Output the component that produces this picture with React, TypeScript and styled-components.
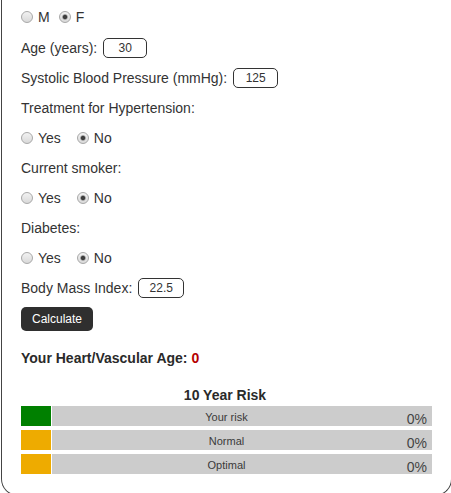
import React from "react";
import styled, { createGlobalStyle } from "styled-components";

const Global = createGlobalStyle`
  html, body {
    margin: 0;
    padding: 0;
    background: #fff;
    overflow: hidden;
  }
  body {
    font-family: "Liberation Sans", Arial, Helvetica, sans-serif;
    font-size: 14px;
    color: #333;
  }
`;

const Panel = styled.div`
  box-sizing: border-box;
  width: 451px;
  margin-left: 1px;
  border: 1px solid #444;
  border-top: none;
  border-radius: 0 0 17px 17px;
  padding: 0 19px 21px 19px;
  display: flex;
  flex-direction: column;
`;

const Row = styled.div<{ $h?: number }>`
  height: ${(p) => p.$h ?? 30}px;
  display: flex;
  align-items: center;
  gap: 6px;
  white-space: nowrap;
`;

const Label = styled.span`
  font-size: 14px;
  color: #333;
`;

const OptionGroup = styled.div<{ $gap: number }>`
  display: flex;
  align-items: center;
  gap: ${(p) => p.$gap}px;
`;

const Option = styled.label`
  display: flex;
  align-items: center;
  gap: 5px;
  font-size: 14px;
  color: #333;
`;

const Radio = styled.input.attrs({ type: "radio" })`
  appearance: none;
  -webkit-appearance: none;
  width: 12px;
  height: 12px;
  margin: 0;
  border-radius: 50%;
  border: 1px solid #a8a8a8;
  box-sizing: border-box;
  background: linear-gradient(#f2f2f2, #d9d9d9);
  &:checked {
    background: radial-gradient(circle at center, #3e3e3e 0 1.8px, #9a9a9a 2.4px, transparent 3.2px),
      linear-gradient(#f2f2f2, #d9d9d9);
  }
`;

const Field = styled.input.attrs({ type: "text" })<{ $w?: number }>`
  box-sizing: border-box;
  width: ${(p) => p.$w ?? 45}px;
  height: 20px;
  margin: 0;
  padding: 0;
  border: 1px solid #333;
  border-radius: 5px;
  background: #fff;
  font-family: "Liberation Sans", Arial, sans-serif;
  font-size: 12px;
  color: #333;
  text-align: center;
  outline: none;
`;

const Button = styled.button`
  align-self: flex-start;
  margin-top: 4px;
  height: 24px;
  padding: 0 11px;
  border: none;
  border-radius: 5px;
  background: #2f2f2f;
  color: #fff;
  font-family: "Liberation Sans", Arial, sans-serif;
  font-size: 12px;
  cursor: pointer;
`;

const HeartAge = styled.div`
  margin-top: 19px;
  font-size: 14px;
  font-weight: bold;
  color: #2a2a2a;
  line-height: 16px;
`;

const Red = styled.span`
  color: #b50000;
`;

const RiskTitle = styled.div`
  margin-top: 21px;
  padding-right: 3px;
  text-align: center;
  font-size: 14px;
  font-weight: bold;
  color: #2a2a2a;
  line-height: 16px;
`;

const Bars = styled.div`
  margin-top: 3px;
  display: flex;
  flex-direction: column;
  gap: 4px;
`;

const BarRow = styled.div`
  display: grid;
  grid-template-columns: 31px 1fr 31px;
  height: 20px;
`;

const Swatch = styled.div<{ $color: string }>`
  width: 30px;
  height: 20px;
  background: ${(p) => p.$color};
`;

const BarLabel = styled.div`
  background: #cccccc;
  font-size: 11px;
  line-height: 20px;
  padding-top: 1px;
  height: 19px;
  text-align: center;
  color: #3a3a3a;
`;

const BarValue = styled.div`
  background: #cccccc;
  font-size: 14px;
  line-height: 16px;
  padding-top: 5px;
  padding-right: 5px;
  height: 15px;
  text-align: right;
  color: #444;
  overflow: visible;
`;

const YesNo: React.FC<{ name: string }> = ({ name }) => (
  <OptionGroup $gap={16}>
    <Option>
      <Radio name={name} />
      Yes
    </Option>
    <Option>
      <Radio name={name} defaultChecked />
      No
    </Option>
  </OptionGroup>
);

const risks = [
  { label: "Your risk", color: "#008000", value: "0%" },
  { label: "Normal", color: "#eeab00", value: "0%" },
  { label: "Optimal", color: "#eeab00", value: "0%" },
];

export default function App() {
  return (
    <>
      <Global />
      <Panel>
        <Row $h={33}>
          <OptionGroup $gap={9}>
            <Option>
              <Radio name="sex" />M
            </Option>
            <Option>
              <Radio name="sex" defaultChecked />F
            </Option>
          </OptionGroup>
        </Row>
        <Row>
          <Label>Age (years):</Label>
          <Field $w={44} defaultValue="30" />
        </Row>
        <Row>
          <Label>Systolic Blood Pressure (mmHg):</Label>
          <Field defaultValue="125" />
        </Row>
        <Row>
          <Label>Treatment for Hypertension:</Label>
        </Row>
        <Row>
          <YesNo name="treat" />
        </Row>
        <Row>
          <Label>Current smoker:</Label>
        </Row>
        <Row>
          <YesNo name="smoke" />
        </Row>
        <Row>
          <Label>Diabetes:</Label>
        </Row>
        <Row>
          <YesNo name="diab" />
        </Row>
        <Row>
          <Label>Body Mass Index:</Label>
          <Field $w={46} defaultValue="22.5" />
        </Row>
        <Button>Calculate</Button>
        <HeartAge>
          Your Heart/Vascular Age: <Red>0</Red>
        </HeartAge>
        <RiskTitle>10 Year Risk</RiskTitle>
        <Bars>
          {risks.map((r) => (
            <BarRow key={r.label}>
              <Swatch $color={r.color} />
              <BarLabel>{r.label}</BarLabel>
              <BarValue>{r.value}</BarValue>
            </BarRow>
          ))}
        </Bars>
      </Panel>
    </>
  );
}
